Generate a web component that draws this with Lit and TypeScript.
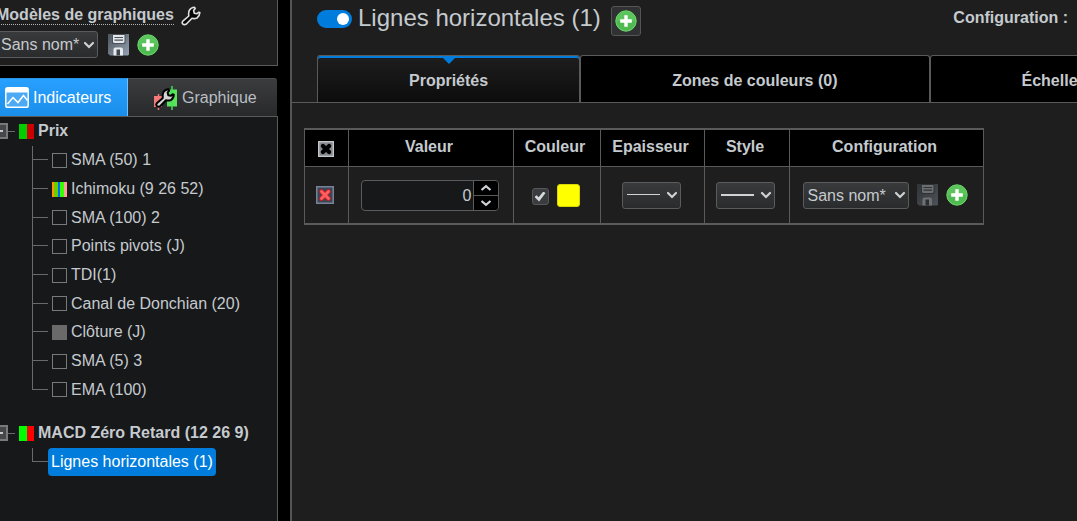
import { LitElement, html, css, svg } from "lit";
import { customElement, property, state } from "lit/decorators.js";
import { classMap } from "lit/directives/class-map.js";

const plusIcon = html`<svg width="22" height="22" viewBox="0 0 22 22" aria-hidden="true">
  <circle cx="11" cy="11" r="10.2" fill="#4fb952" stroke="#6fe06c" stroke-width="1" />
  <path d="M1.600 11a9.400 9.400 0 0 1 18.800 0z" fill="#5cc45c" />
  <path d="M11 5.200v11.600M5.200 11h11.600" stroke="#fff" stroke-width="3.400" fill="none" />
</svg>`;

const saveIcon = html`<svg width="21" height="22" viewBox="0 0 21 22" aria-hidden="true">
  <defs>
    <linearGradient id="disk" x1="0" y1="0" x2="1" y2="1">
      <stop offset="0" stop-color="#4c545c" /><stop offset="1" stop-color="#94a1b2" />
    </linearGradient>
  </defs>
  <path d="M0 0h21v20.500l-1 1H2L0 19.500z" fill="url(#disk)" />
  <path d="M4 0h13.500v8.500q0 1.500-1.500 1.500H5.500Q4 10 4 8.500z" fill="#4a535c" />
  <path d="M5 1h11.500v6.500q0 1.500-1.500 1.500H6.500Q5 9 5 7.500z" fill="#e3e6e9" />
  <path d="M6.500 3.500h8.500M6.500 6.200h8.500" stroke="#4a535c" stroke-width="1.200" />
  <path d="M5.500 21.500v-6q0-2 2-2H13q2 0 2 2v6z" fill="#e8eaec" />
  <path d="M8.500 15.500H12v6H8.500z" fill="#3f4852" />
</svg>`;

const wrenchPath =
  "M1.800 15.200 7.800 10Q7.300 6.500 8.300 4.300Q10 1.300 13.600 1.200L14.200 2.600L12.600 4.600L13.300 7.300L16 7.800L17.600 6.200L18.800 6.600Q18.600 10.200 16 12Q13.400 13 11 12.300L5.400 18Q3.200 19.400 1.700 17.900Q.6 16.500 1.800 15.200Z";

const wrenchIcon = html`<svg width="20" height="20" viewBox="0 0 20 20" aria-hidden="true">
  <path d=${wrenchPath} fill="#050505" stroke="#e0e0e0" stroke-width="1.600" stroke-linejoin="round" />
</svg>`;

const chartIcon = html`<svg width="24" height="21" viewBox="0 0 24 21" aria-hidden="true">
  <rect x=".8" y=".8" width="22.400" height="19.400" rx="1.800" fill="#4caaf5" stroke="#fff" stroke-width="1.500" />
  <path d="M1 1h22v4.500H1z" fill="#fff" />
  <path d="M2.500 17 8 10.500 13 15.500 18.500 8.500l4 5" fill="none" stroke="#fff" stroke-width="1.500" />
</svg>`;

const candlesIcon = html`<svg width="25" height="24" viewBox="0 0 25 24" aria-hidden="true">
  <path d="M1 10h8v11H1z" fill="#f4797b" /><path d="M5.500 8v16" stroke="#f4797b" stroke-width="1.500" />
  <path d="M14 3.500h10v17H14z" fill="#58e45c" /><path d="M19 0v24" stroke="#43df55" stroke-width="1.500" />
  <path transform="translate(2 2)" d=${wrenchPath} fill="#d4d4d4" stroke="#000" stroke-width="2" stroke-linejoin="round" />
</svg>`;

const cross = (size: number, frame: string, back: string, mark: string, edge: string) => html`<svg
  width=${size} height=${size} viewBox="0 0 18 18" aria-hidden="true">
  <rect x=".75" y=".75" width="16.500" height="16.500" fill=${back} stroke=${frame} stroke-width="1.500" />
  <path d="M5.500 5.500l7 7M12.500 5.500l-7 7" stroke=${edge} stroke-width="4.800" stroke-linecap="round" />
  <path d="M5.500 5.500l7 7M12.500 5.500l-7 7" stroke=${mark} stroke-width="3" stroke-linecap="round" />
</svg>`;

const reset = css`
  *, *::before { box-sizing: border-box; }
  button { padding: 0; border: 0; background: none; color: inherit; font: inherit; display: flex; cursor: pointer; }
  svg { display: block; }
  ul { list-style: none; margin: 0; padding: 0; }
  a { color: inherit; text-decoration: none; }
`;

@customElement("combo-box")
class ComboBox extends LitElement {
  @property() label = "";
  @property() text = "";
  @property({ type: Number }) stroke = 0;

  static styles = [reset, css`
    :host { display: block; }
    .box { display: grid; }
    select, svg { grid-area: 1 / 1; }
    select {
      appearance: none; width: 100%; height: 27px; margin: 0; padding: 0 4px;
      border: 1px solid #5a5b5d; border-radius: 3px;
      background: linear-gradient(#393a3c, #2a2b2d);
      color: #c5cace; font: 16px "Liberation Sans", Arial, sans-serif;
    }
    svg { align-self: center; pointer-events: none; }
    .arrow { justify-self: end; margin-right: 3px; }
    .line { margin-left: 5px; }
  `];

  render() {
    return html`<div class="box">
      <select aria-label=${this.label}><option>${this.text}</option></select>
      ${this.stroke
        ? html`<svg class="line" width="33" height="4"><rect y="1" width="33" height=${this.stroke} fill="#d0d3d5" /></svg>`
        : ""}
      <svg class="arrow" width="12" height="8" viewBox="0 0 12 8">
        <path d="M2 2l4 4 4-4" fill="none" stroke="#cfd2d4" stroke-width="2.200" stroke-linecap="round" />
      </svg>
    </div>`;
  }
}

interface Item { name: string; swatch?: string }

@customElement("side-bar")
class SideBar extends LitElement {
  items: Item[] = [
    { name: "SMA (50) 1" },
    { name: "Ichimoku (9 26 52)", swatch: "ichimoku" },
    { name: "SMA (100) 2" },
    { name: "Points pivots (J)" },
    { name: "TDI(1)" },
    { name: "Canal de Donchian (20)" },
    { name: "Clôture (J)", swatch: "grey" },
    { name: "SMA (5) 3" },
    { name: "EMA (100)" },
  ];

  static styles = [reset, css`
    :host { display: flex; flex-direction: column; background: #000; overflow: hidden; }
    .models { background: #1e1e1e; border: solid #5a5a5a; border-width: 0 1px 1px 0; height: 66px; margin-bottom: 12px; }
    .title { display: flex; align-items: center; height: 31px; margin-left: -4px; gap: 7px; }
    h2 { margin: 0; font-size: 16px; line-height: 18px; border-bottom: 1px dotted #b0b4b8; }
    .tools { display: flex; align-items: center; margin-left: -4px; }
    .tools combo-box { width: 102px; margin-right: 10px; }
    .tools button + button { margin-left: 8px; }
    .tabs { display: grid; grid-template-columns: 128px 1fr; height: 38px; margin-right: 1px; }
    .tab { align-items: center; gap: 4px; background: linear-gradient(#3b3c3e, #28292b); border-top: 1px solid #4c4d4f; border-radius: 0 3px 0 0; padding-left: 25px; color: #b9bec3; }
    .tab.on { background: linear-gradient(#28a0ff, #1a8fea); border-right: 1px solid #6fc0ff; border-top-color: #2590e6; border-radius: 0; color: #fff; padding-left: 5px; }
    .tree { flex: 1; background: #17181a; border: solid #5a5a5a; border-width: 1px 1px 0 0; }
    .group { display: flex; align-items: center; height: 28px; font-weight: bold; }
    .group.second { margin-top: 15px; }
    .fold { width: 8px; height: 16px; align-items: center; background: #45474a; border: 2px solid #77797b; border-left: 0; }
    .fold::before { content: ""; width: 3px; height: 2px; background: #c8c8c8; }
    .link { width: 7px; height: 1px; background: #6a6a6a; margin-right: 4px; }
    .swatch { width: 15px; height: 15px; margin-right: 4px; border: 1px solid #77797b; }
    .pair { border: 0; background: linear-gradient(90deg, #0c0 8px, #c00 8px); }
    .vivid { border: 0; background: linear-gradient(90deg, #0f0 8px, #f00 8px); }
    .grey { border: 0; background: #6a6a6a; }
    .ichimoku { border: 0; background: linear-gradient(90deg, #ff9500 2px, #66d000 2px 6px, #0068ff 6px 8px, #3f0 8px 12px, #ff9c9c 12px); }
    ul { display: flex; flex-direction: column; margin: 1px 0 0 32px; }
    .indicators { height: 258px; }
    li { flex: 1; display: grid; grid-template-columns: 16px 1fr; }
    .branch { display: grid; grid-template-rows: 1fr 1fr; border-left: 1px solid #6a6a6a; }
    .branch::before { content: ""; border-bottom: 1px solid #6a6a6a; }
    li:last-child .branch { border-left: 0; }
    li:last-child .branch::before { border-left: 1px solid #6a6a6a; }
    li a { display: flex; align-items: center; padding-left: 4px; }
    li .current { justify-self: start; height: 28px; padding: 0 3px; border-radius: 4px; background: #007ddc; color: #fff; }
  `];

  render() {
    return html`
      <section class="models">
        <div class="title"><h2>Modèles de graphiques</h2><button aria-label="Options">${wrenchIcon}</button></div>
        <div class="tools">
          <combo-box label="Modèle" text="Sans nom*"></combo-box>
          <button aria-label="Enregistrer">${saveIcon}</button>
          <button aria-label="Ajouter">${plusIcon}</button>
        </div>
      </section>
      <div class="tabs">
        <button class="tab on">${chartIcon}Indicateurs</button>
        <button class="tab">${candlesIcon}Graphique</button>
      </div>
      <nav class="tree">
        <div class="group"><button class="fold" aria-label="Replier"></button><span class="link"></span><span class="swatch pair"></span>Prix</div>
        <ul class="indicators">
          ${this.items.map((i) => html`<li><span class="branch"></span>
            <a href="#"><span class=${classMap({ swatch: true, [i.swatch ?? "empty"]: true })}></span>${i.name}</a></li>`)}
        </ul>
        <div class="group second"><button class="fold" aria-label="Replier"></button><span class="link"></span><span class="swatch vivid"></span>MACD Zéro Retard (12 26 9)</div>
        <ul><li><span class="branch"></span><a class="current" href="#">Lignes horizontales (1)</a></li></ul>
      </nav>`;
  }
}

@customElement("level-table")
class LevelTable extends LitElement {
  @state() value = 0;

  static styles = [reset, css`
    :host { display: block; }
    table { border-collapse: separate; border-spacing: 0; table-layout: fixed; width: 680px; border: solid #5a5a5a; border-width: 2px 0 2px 1px; }
    th, td { padding: 0 3px 0 0; border-right: 1px solid #5a5a5a; vertical-align: middle; }
    th { height: 37px; padding: 0 4px 2px 0; background: #000; border-bottom: 1px solid #5a5a5a; }
    th.c1 { padding: 2px 2px 0 0; }
    td { height: 56px; }
    .c1 { width: 44px; } .c2 { width: 165px; } .c3 { width: 87px; } .c4 { width: 104px; } .c5 { width: 85px; }
    .cell { display: flex; align-items: center; justify-content: center; gap: 8px; }
    .spin { display: grid; grid-template-columns: 1fr 25px; width: 138px; height: 31px; border: 1px solid #5a5b5d; border-radius: 4px; overflow: hidden; background: #17181a; }
    .spin input { appearance: textfield; min-width: 0; border: 0; margin: 0; padding: 2px 1px 0; background: none; color: #c5cace; text-align: right; font: inherit; outline: 0; }
    .steps { display: grid; grid-template-rows: 1fr 1fr; gap: 1px; background: #5a5b5d; border-left: 1px solid #5a5b5d; }
    .steps button { background: #000; align-items: center; justify-content: center; }
    .check { appearance: none; width: 17px; height: 17px; margin: 3px 0 0; border: 1px solid #55575a; border-radius: 3px; background: #3b3c3f; display: grid; place-items: center; }
    .check:checked::before { content: ""; width: 11px; height: 10px; background: #d6dadd; clip-path: polygon(0 55%, 18% 38%, 38% 58%, 80% 0, 100% 14%, 42% 100%); }
    .color { width: 23px; height: 23px; border: 1px solid #d8d800; border-radius: 3px; background: #ff0; }
    .short { width: 59px; }
    .named { width: 106px; }
    .off { opacity: 0.4; }
  `];

  arrow(d: string) {
    return html`<svg width="12" height="8" viewBox="0 0 12 8">${svg`<path d=${d} fill="none" stroke="#d0d3d5" stroke-width="2.200"/>`}</svg>`;
  }

  render() {
    return html`<table>
      <thead><tr>
        <th class="c1"><div class="cell"><button aria-label="Tout supprimer">${cross(16, "#c4c7ca", "#85888d", "#000", "#000")}</button></div></th>
        <th class="c2">Valeur</th><th class="c3">Couleur</th><th class="c4">Epaisseur</th><th class="c5">Style</th><th>Configuration</th>
      </tr></thead>
      <tbody><tr>
        <td><div class="cell"><button aria-label="Supprimer">${cross(18, "#76839a", "#3d4654", "#ff5f5f", "#c11f24")}</button></div></td>
        <td><div class="cell"><div class="spin">
          <input type="text" inputmode="numeric" aria-label="Valeur" .value=${String(this.value)} />
          <div class="steps">
            <button aria-label="Augmenter" @click=${() => this.value++}>${this.arrow("M1.500 6 6 2.200 10.500 6")}</button>
            <button aria-label="Diminuer" @click=${() => this.value--}>${this.arrow("M1.500 2 6 5.800 10.500 2")}</button>
          </div></div></div></td>
        <td><div class="cell"><input class="check" type="checkbox" aria-label="Afficher" checked /><button class="color" aria-label="Couleur"></button></div></td>
        <td><div class="cell"><combo-box class="short" label="Epaisseur" stroke="1"></combo-box></div></td>
        <td><div class="cell"><combo-box class="short" label="Style" stroke="2"></combo-box></div></td>
        <td><div class="cell"><combo-box class="named" label="Configuration" text="Sans nom*"></combo-box>
          <button class="off" aria-label="Enregistrer" disabled>${saveIcon}</button><button aria-label="Ajouter">${plusIcon}</button></div></td>
      </tr></tbody>
    </table>`;
  }
}

@customElement("app-root")
class AppRoot extends LitElement {
  static styles = [reset, css`
    :host {
      display: grid; grid-template-columns: 278px minmax(0, 1fr); column-gap: 12px; height: 100vh; overflow: hidden;
      background: #000; color: #c5cace; font: 16px/18px "Liberation Sans", Arial, sans-serif;
    }
    main { background: #1e1e1e; border-left: 2px solid #555; overflow: hidden; }
    header { display: flex; align-items: center; height: 36px; padding: 0 9px 0 25px; }
    .switch { appearance: none; width: 35px; height: 18px; margin: 2px 6px 0 0; border-radius: 9px; background: #007ddc; display: flex; align-items: center; justify-content: flex-end; padding: 0 3px; }
    .switch::before { content: ""; width: 12px; height: 12px; border-radius: 50%; background: #fff; }
    h1 { margin: 0 10px 0 0; font-size: 24px; line-height: 28px; font-weight: normal; }
    .add { align-self: flex-end; width: 30px; height: 30px; align-items: center; justify-content: center; border: 1px solid #555; border-radius: 3px; background: #303133; }
    .config { margin-left: auto; font-weight: bold; }
    .tabs { display: flex; height: 48px; margin-top: 19px; padding-left: 25px; border-bottom: 1px solid #5a5a5a; }
    .tab { flex: none; flex-direction: column; align-items: center; padding: 0 91px; border: 1px solid #5a5a5a; border-bottom: 0; border-radius: 3px 3px 0 0; background: #000; font-weight: bold; }
    .tab span { margin: auto; padding-top: 3px; }
    .tab.on { background: linear-gradient(#1e1e1e, #0c0c0c); box-shadow: inset 0 2px #007ddc; }
    .tab.on svg { margin-bottom: -9px; }
    level-table { padding: 25px 12px; }
  `];

  render() {
    return html`
      <side-bar></side-bar>
      <main>
        <header>
          <input class="switch" type="checkbox" role="switch" aria-labelledby="name" checked />
          <h1 id="name">Lignes horizontales (1)</h1>
          <button class="add" aria-label="Ajouter">${plusIcon}</button>
          <span class="config">Configuration :</span>
        </header>
        <div class="tabs">
          <button class="tab on"><svg width="14" height="9"><path d="M0 1h14L7 8z" fill="#007ddc" /></svg><span>Propriétés</span></button>
          <button class="tab"><span>Zones de couleurs (0)</span></button>
          <button class="tab"><span>Échelle</span></button>
        </div>
        <level-table></level-table>
      </main>`;
  }
}
